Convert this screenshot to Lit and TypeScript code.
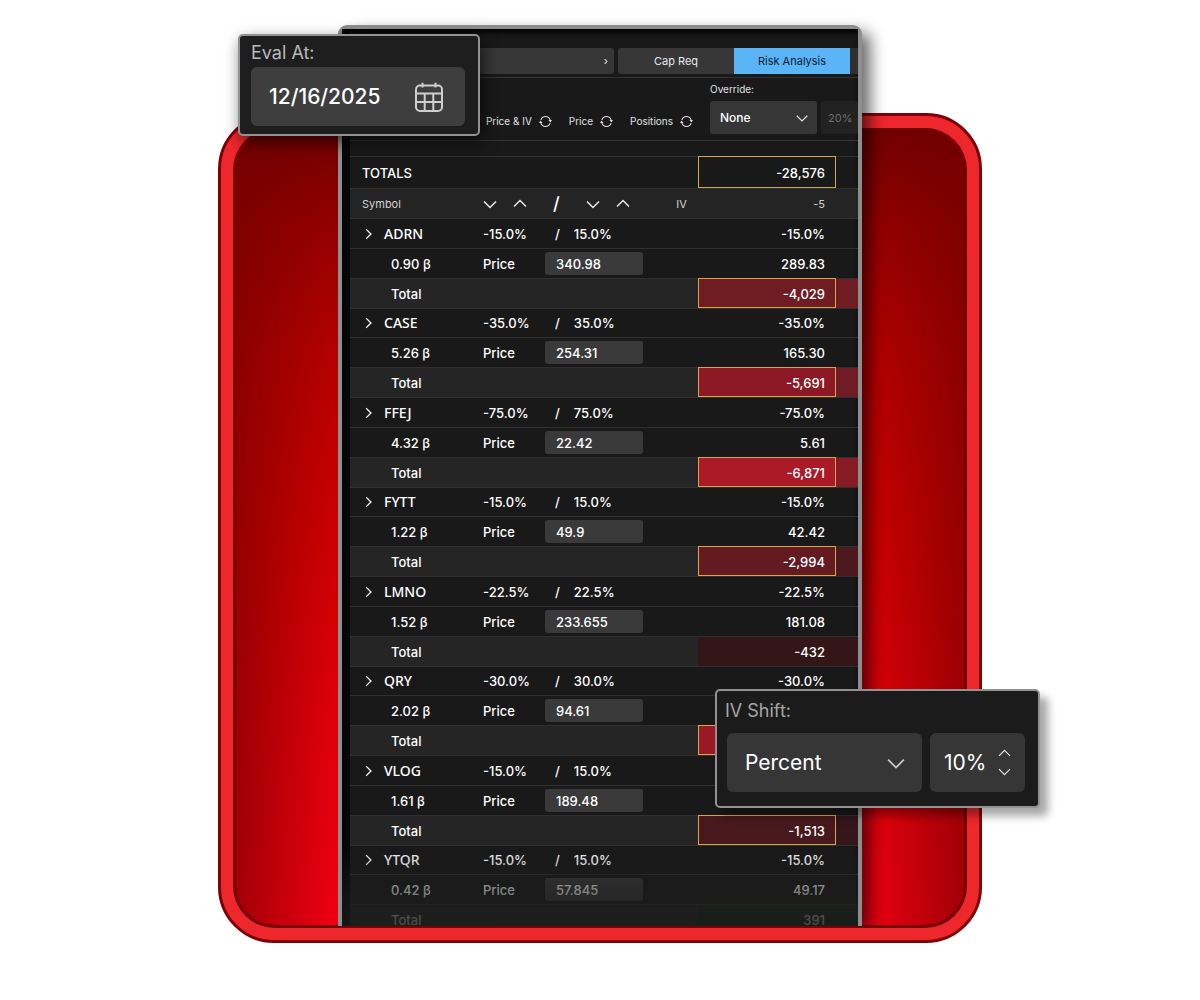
import { LitElement, html, css, svg } from "lit";
import { customElement, property } from "lit/decorators.js";

type Tone = "t1" | "t2" | "t3" | "t4" | "t5" | "t6" | "t7" | "gain";

interface Position {
  symbol: string;
  range: string;
  beta: string;
  price: string;
  shocked: string;
  total: string;
  tone: Tone;
  boxed: boolean;
}

const POSITIONS: Position[] = [
  { symbol: "ADRN", range: "15.0%", beta: "0.90", price: "340.98", shocked: "289.83", total: "-4,029", tone: "t4", boxed: true },
  { symbol: "CASE", range: "35.0%", beta: "5.26", price: "254.31", shocked: "165.30", total: "-5,691", tone: "t5", boxed: true },
  { symbol: "FFEJ", range: "75.0%", beta: "4.32", price: "22.42", shocked: "5.61", total: "-6,871", tone: "t7", boxed: true },
  { symbol: "FYTT", range: "15.0%", beta: "1.22", price: "49.9", shocked: "42.42", total: "-2,994", tone: "t3", boxed: true },
  { symbol: "LMNO", range: "22.5%", beta: "1.52", price: "233.655", shocked: "181.08", total: "-432", tone: "t1", boxed: false },
  { symbol: "QRY", range: "30.0%", beta: "2.02", price: "94.61", shocked: "", total: "", tone: "t6", boxed: true },
  { symbol: "VLOG", range: "15.0%", beta: "1.61", price: "189.48", shocked: "", total: "-1,513", tone: "t2", boxed: true },
  { symbol: "YTQR", range: "15.0%", beta: "0.42", price: "57.845", shocked: "49.17", total: "391", tone: "gain", boxed: false },
];

const chevron = (dir: "up" | "down" | "right", cls: string) => {
  const d = { up: "M1 9 L8 2 L15 9", down: "M1 3 L8 10 L15 3", right: "M5 0 L11 6 L5 12" }[dir];
  return html`<svg class=${cls} viewBox="0 -1 16 14" aria-hidden="true">${svg`<path d=${d}></path>`}</svg>`;
};

const syncIcon = html`<svg class="sync-icon" viewBox="0 0 14 14" aria-hidden="true">
  <path d="M2 5.2 A5.3 5.3 0 0 1 12 5.2 M12 8.8 A5.3 5.3 0 0 1 2 8.8"></path>
  <path class="solid" d="M10.2 5.4 L14 5.4 L12.3 8 Z M0 8.6 L3.8 8.6 L1.7 6 Z"></path>
</svg>`;

const calendarIcon = html`<svg class="calendar" viewBox="0 0 28 30" aria-hidden="true">
  <rect x="1" y="3.5" width="26" height="25.5" rx="4"></rect>
  <path d="M1 11.5 H27 M1 20 H27 M9.7 11.5 V29 M18.3 11.5 V29 M7.5 0.8 V5.6 M20.5 0.8 V5.6"></path>
</svg>`;

const controls = css`
  * {
    box-sizing: border-box;
  }
  button,
  input,
  select {
    margin: 0;
    padding: 0;
    border: 0;
    color: inherit;
    font: inherit;
    background: none;
    appearance: none;
    min-width: 0;
  }
  svg {
    display: block;
    flex: none;
    fill: none;
    stroke: currentColor;
  }
`;

@customElement("risk-table")
class RiskTable extends LitElement {
  @property({ attribute: false }) rows: Position[] = [];

  static styles = [
    controls,
    css`
      :host {
        display: block;
      }
      table {
        width: 100%;
        table-layout: fixed;
        border-collapse: separate;
        border-spacing: 0;
        font-size: 13px;
        font-weight: 500;
        line-height: 20px;
        color: #ffffff;
      }
      .c-label { width: 62px; }
      .c-input { width: 100px; }
      .c-iv { width: 53px; }
      .c-value { width: 138px; }
      .c-next { width: 22px; }
      th,
      td {
        height: 30px;
        padding: 0;
        border-top: 1px solid #303030;
        font-weight: inherit;
        text-align: left;
        white-space: nowrap;
      }
      tbody:nth-of-type(even) .lead > * {
        height: 29px;
      }
      .totals > * {
        height: 32px;
      }
      .totals th {
        padding-left: 12px;
      }
      .head > * {
        font-size: 11px;
        font-weight: 400;
        color: #d4d4d4;
        background: #242424;
      }
      .head th:first-child {
        padding-left: 12px;
      }
      .sum > * {
        background: #252525;
      }
      .symbol {
        display: flex;
        align-items: center;
        gap: 9px;
        padding-left: 12px;
        font-family: "Noto Sans", "Open Sans", sans-serif;
        font-size: 14px;
      }
      .indent {
        padding-left: 41px;
      }
      .caret {
        width: 13px;
        height: 12px;
        stroke-width: 1.7;
      }
      .pair {
        display: flex;
        align-items: center;
        gap: 14px;
        padding-left: 10px;
      }
      .sorts {
        display: flex;
        gap: 16px;
        color: #e6e6e6;
      }
      .sorts .mark {
        font-size: 18px;
        line-height: 20px;
        font-weight: 500;
        color: #ffffff;
        padding: 0 10px;
      }
      .sorts button {
        display: flex;
        align-items: center;
        width: 14px;
        height: 20px;
      }
      .sort {
        width: 14px;
        height: 12px;
        stroke-width: 1.8;
      }
      td.num,
      th.num {
        text-align: right;
        padding-right: 11px;
      }
      .iv {
        text-align: center;
        padding-left: 20px;
      }
      .price {
        display: block;
        width: 98px;
        height: 23px;
        padding-left: 11px;
        border-radius: 3px;
        background: #3a3a3a;
      }
      .boxed {
        outline: 1px solid #d6a54c;
        outline-offset: -1px;
      }
      .sum .t1 { background: #341619; }
      .sum .t2 { background: #47191c; }
      .sum .t3 { background: #631a21; }
      .sum .t4 { background: #701c23; }
      .sum .t5 { background: #8c1925; }
      .sum .t6 { background: #991924; }
      .sum .t7 { background: #ab1a27; }
      .sum .gain { background: #1a261d; }
      .sum .next.t2 { background: #33171a; }
      .sum .next.t3 { background: #4c191f; }
      .sum .next.t5 { background: #701c25; }
      .sum .next.t7 { background: #861a25; }
    `,
  ];

  render() {
    return html`<table>
      <colgroup>
        <col /><col class="c-label" /><col class="c-input" /><col class="c-iv" /><col class="c-value" /><col class="c-next" />
      </colgroup>
      <thead>
        <tr class="totals">
          <th scope="row" colspan="4">TOTALS</th>
          <td class="num boxed">-28,576</td>
          <td></td>
        </tr>
        <tr class="head">
          <th scope="col">Symbol</th>
          <th colspan="2">
            <div class="sorts">
              <button aria-label="Lower range down">${chevron("down", "sort")}</button>
              <button aria-label="Lower range up">${chevron("up", "sort")}</button>
              <span class="mark">/</span>
              <button aria-label="Upper range down">${chevron("down", "sort")}</button>
              <button aria-label="Upper range up">${chevron("up", "sort")}</button>
            </div>
          </th>
          <th class="iv" scope="col">IV</th>
          <th class="num" scope="col">-5</th>
          <th></th>
        </tr>
      </thead>
      ${this.rows.map(
        (p) => html`<tbody>
          <tr class="lead">
            <th scope="row"><button class="symbol">${chevron("right", "caret")}${p.symbol}</button></th>
            <td>-${p.range}</td>
            <td colspan="2"><div class="pair"><span>/</span><span>${p.range}</span></div></td>
            <td class="num">-${p.range}</td>
            <td></td>
          </tr>
          <tr>
            <td class="indent">${p.beta} β</td>
            <td>Price</td>
            <td><input class="price" aria-label="${p.symbol} price" .value=${p.price} /></td>
            <td></td>
            <td class="num">${p.shocked}</td>
            <td></td>
          </tr>
          <tr class="sum">
            <td class="indent" colspan="4">Total</td>
            <td class="num ${p.tone} ${p.boxed ? "boxed" : ""}">${p.total}</td>
            <td class="next ${p.tone}"></td>
          </tr>
        </tbody>`
      )}
    </table>`;
  }
}

@customElement("app-root")
class AppRoot extends LitElement {
  static styles = [
    controls,
    css`
      :host {
        display: block;
        min-height: 100vh;
        overflow: hidden;
        background: #ffffff;
        font-family: Inter, "Liberation Sans", sans-serif;
      }
      .stage {
        position: relative;
        display: grid;
        grid-template-columns: minmax(0, 1fr);
        max-width: 764px;
        margin: 0 auto;
        padding: 25px 0 57px;
      }
      .frame {
        grid-area: 1 / 1;
        margin-top: 88px;
        padding: 12px;
        border: 3px solid #7d0006;
        border-radius: 56px;
        background: #ee272d;
        display: flex;
      }
      .glow {
        flex: 1;
        border-radius: 42px;
        border: 3px solid #760004;
        border-top-width: 0;
        background:
          linear-gradient(90deg, rgba(112, 0, 0, 0.62), rgba(112, 0, 0, 0) 105px calc(100% - 105px), rgba(112, 0, 0, 0.62)),
          linear-gradient(#720000, #960000 12%, #b80000 28%, #d00000 50%, #e4000a 74%, #f40012);
      }
      .panel {
        grid-area: 1 / 1;
        position: relative;
        justify-self: center;
        width: 100%;
        max-width: 524px;
        margin-bottom: 17px;
        border: 4px solid #8e8e8e;
        border-bottom: 0;
        border-radius: 9px 9px 0 0;
        background: #191919;
        color: #e2e2e2;
        box-shadow: 10px 6px 16px -2px rgba(0, 0, 0, 0.6);
        clip-path: inset(-40px -40px 0 -40px);
      }
      .screen {
        overflow: hidden;
        padding-left: 8px;
        background: linear-gradient(90deg, #060708 8px, transparent 8px);
        box-shadow: inset 0 5px 4px -1px #050505;
      }
      .screen risk-table {
        margin-bottom: -8px;
      }
      .fade {
        position: absolute;
        inset: auto 0 0 0;
        height: 80px;
        pointer-events: none;
        background: linear-gradient(rgba(26, 28, 26, 0), rgba(26, 28, 26, 0.5) 50%, rgba(26, 28, 26, 0.8) 92%);
      }
      .tabs {
        display: flex;
        padding: 19px 0 3px;
        border-bottom: 1px solid #333333;
        font-size: 11px;
        line-height: 16px;
      }
      .tabs button {
        height: 26px;
        width: 116px;
        background: #373737;
        color: #e8e8e8;
      }
      .tabs .view {
        flex: 1;
        margin-right: 4px;
        padding-right: 6px;
        border-radius: 3px;
        text-align: right;
      }
      .tabs .first {
        border-radius: 3px 0 0 3px;
      }
      .tabs .active {
        background: #5ab4f6;
        color: #0c2234;
      }
      .tabs .more {
        width: 8px;
        background: #303030;
      }
      .tools {
        display: flex;
        justify-content: flex-end;
        align-items: flex-end;
        gap: 17px;
        padding: 4px 0 6px;
        border-bottom: 1px solid #333333;
        margin-bottom: 15px;
        font-size: 10px;
        line-height: 14px;
      }
      .sync {
        display: flex;
        align-items: center;
        gap: 7px;
        height: 26px;
      }
      .sync-icon {
        width: 13px;
        height: 13px;
        stroke-width: 1.2;
      }
      .sync-icon .solid {
        fill: currentColor;
        stroke: none;
      }
      .override {
        display: grid;
        grid-template-columns: 107px 37px;
        gap: 5px 4px;
      }
      .override label {
        grid-column: 1 / -1;
      }
      .override select,
      .override input {
        height: 33px;
        width: 100%;
        border-radius: 3px;
        background: #363636;
        padding-left: 10px;
        font-size: 12px;
        font-weight: 500;
        color: #ffffff;
      }
      .override input {
        padding-left: 7px;
        font-size: 11px;
        font-weight: 400;
        color: #6e6e6e;
        background: #222222;
      }
      .pick {
        display: grid;
        align-items: center;
      }
      .pick > * {
        grid-area: 1 / 1;
      }
      .pick svg {
        justify-self: end;
        pointer-events: none;
      }
      .small-arrow {
        width: 12px;
        height: 12px;
        margin-right: 9px;
        stroke-width: 1.6;
      }
      .card {
        position: absolute;
        border: 2px solid #929292;
        border-radius: 5px;
        background: #1e1e1e;
        color: #b9b9b9;
        font-size: 18px;
        line-height: 22px;
      }
      .card input,
      .card select {
        width: 100%;
        height: 59px;
        border-radius: 6px;
        background: #3e3e3e;
        color: #ffffff;
        font-size: 21px;
        padding-left: 18px;
      }
      .eval {
        left: 20px;
        top: 34px;
        width: 242px;
        padding: 6px 13px 8px 11px;
        box-shadow: 3px 6px 16px rgba(0, 0, 0, 0.6);
      }
      .eval label,
      .shift label {
        display: block;
      }
      .eval .pick {
        margin-top: 3px;
      }
      .eval input {
        font-weight: 500;
      }
      .calendar {
        width: 28px;
        height: 30px;
        margin-right: 22px;
        stroke-width: 2;
        color: #cfcfcf;
      }
      .shift {
        right: -58px;
        bottom: 192px;
        width: 325px;
        padding: 9px 13px 14px 8px;
        background: #1b1b1b;
        color: #a6a6a6;
        box-shadow: 8px 8px 8px rgba(0, 0, 0, 0.35);
      }
      .fields {
        display: grid;
        grid-template-columns: minmax(0, 1fr) 95px;
        gap: 8px;
        padding: 11px 0 0 2px;
      }
      .shift input,
      .shift select {
        background: #363636;
      }
      .shift input {
        padding-left: 14px;
      }
      .arrow {
        width: 18px;
        height: 16px;
        margin-right: 17px;
        stroke-width: 1.5;
        color: #cfcfcf;
      }
      .steps {
        justify-self: end;
        display: grid;
        gap: 7px;
        margin-right: 14px;
        color: #e2e2e2;
      }
      .step {
        width: 13px;
        height: 11px;
        stroke-width: 1.6;
      }
    `,
  ];

  render() {
    return html`<main class="stage">
      <div class="frame"><div class="glow"></div></div>

      <section class="panel">
        <div class="screen">
          <nav class="tabs">
            <button class="view" aria-label="Next view">›</button>
            <button class="first">Cap Req</button>
            <button class="active">Risk Analysis</button>
            <button class="more" aria-label="More"></button>
          </nav>
          <div class="tools">
            <button class="sync">Price &amp; IV ${syncIcon}</button>
            <button class="sync">Price ${syncIcon}</button>
            <button class="sync">Positions ${syncIcon}</button>
            <div class="override">
              <label for="override">Override:</label>
              <div class="pick">
                <select id="override"><option>None</option></select>
                ${chevron("down", "small-arrow")}
              </div>
              <input aria-label="Override amount" value="20%" disabled />
            </div>
          </div>
          <risk-table .rows=${POSITIONS}></risk-table>
        </div>
        <div class="fade"></div>
      </section>

      <section class="card eval">
        <label for="eval-date">Eval At:</label>
        <div class="pick">
          <input id="eval-date" value="12/16/2025" />
          ${calendarIcon}
        </div>
      </section>

      <section class="card shift">
        <label for="shift-mode">IV Shift:</label>
        <div class="fields">
          <div class="pick">
            <select id="shift-mode"><option>Percent</option></select>
            ${chevron("down", "arrow")}
          </div>
          <div class="pick">
            <input aria-label="Shift amount" value="10%" />
            <div class="steps">
              <button aria-label="Increase">${chevron("up", "step")}</button>
              <button aria-label="Decrease">${chevron("down", "step")}</button>
            </div>
          </div>
        </div>
      </section>
    </main>`;
  }
}
